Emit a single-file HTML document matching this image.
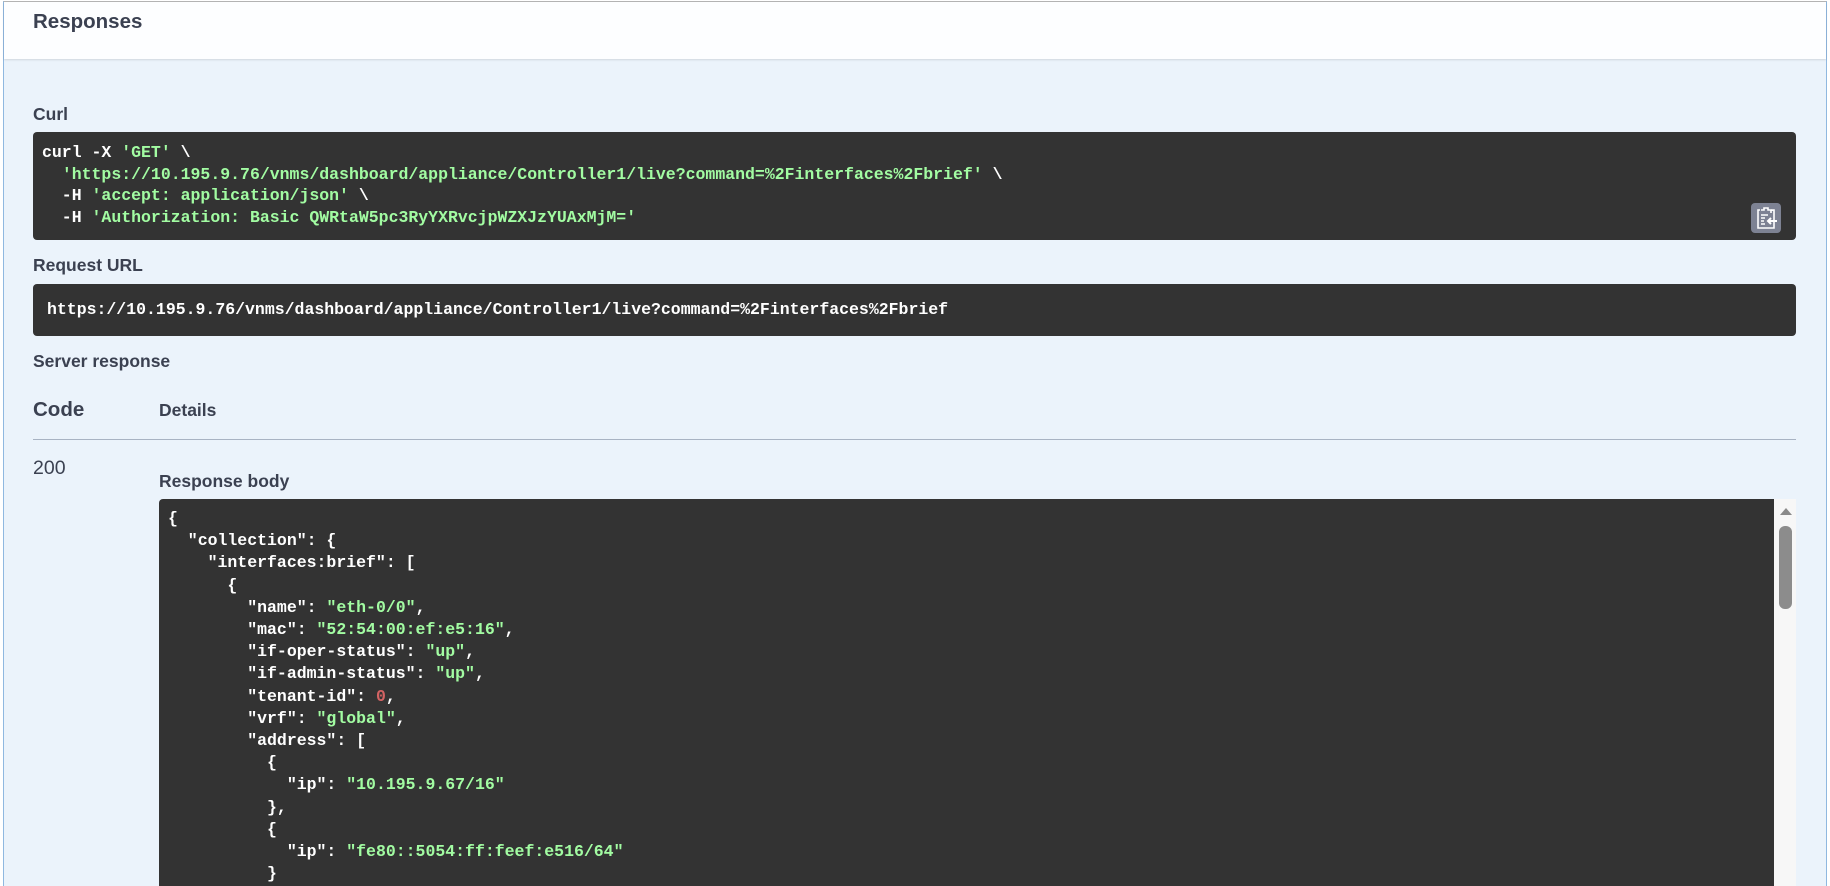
<!DOCTYPE html>
<html><head><meta charset="utf-8"><style>
*{margin:0;padding:0;box-sizing:border-box}
html,body{width:1830px;height:886px;overflow:hidden;background:#fff}
body{font-family:"Liberation Sans",sans-serif;color:#3b4151;position:relative}
.frame{position:absolute;left:3px;top:1px;width:1824px;height:886px;background:#ebf3fb;border-left:1px solid #8fb8e0;border-right:1px solid #8fb8e0;border-top:1px solid #b5b5b5}
.hdr{position:absolute;left:0;top:0;right:0;height:57px;background:#fdfeff;box-shadow:0 1px 2px rgba(0,0,0,.12)}
.lbl{position:absolute;font-weight:bold;font-size:17.5px;color:#3b4151}
.box{position:absolute;background:#333;border-radius:4px;font-family:"Liberation Mono",monospace;font-weight:bold;font-size:16.5px;color:#fff;white-space:pre}
.g{color:#a2fca2}.r{color:#d36363}
</style></head><body>
<div class="frame">
<div class="hdr"><div class="lbl" style="left:29px;top:8px;font-size:20.5px">Responses</div></div>
<div class="lbl" style="left:29px;top:102px">Curl</div>
<div class="box" style="left:29px;top:130px;width:1763px;height:108px;line-height:21.7px;padding:10px 0 0 9px">curl -X <span class="g">'GET'</span> \
  <span class="g">'https://10.195.9.76/vnms/dashboard/appliance/Controller1/live?command=%2Finterfaces%2Fbrief'</span> \
  -H <span class="g">'accept: application/json'</span> \
  -H <span class="g">'Authorization: Basic QWRtaW5pc3RyYXRvcjpWZXJzYUAxMjM='</span></div>
<div style="position:absolute;left:1747px;top:201px;width:30px;height:30px;background:#7d8293;border-radius:4px">
<svg width="30" height="30" viewBox="0 0 30 30"><path d="M10 7h3v-2h4v2h3v3" fill="none" stroke="#fff" stroke-width="1.6"/><path d="M21 8v-1h2v18h-16v-18h2" fill="none" stroke="#fff" stroke-width="1.6"/><path d="M10 12h7M10 15h4M10 18h3M10 21h4" stroke="#fff" stroke-width="1.5"/><path d="M26 18h-9M20 15l-3 3 3 3" fill="none" stroke="#fff" stroke-width="2"/></svg></div>
<div class="lbl" style="left:29px;top:253px">Request URL</div>
<div class="box" style="left:29px;top:282px;width:1763px;height:52px;line-height:52px;padding-left:14px">https://10.195.9.76/vnms/dashboard/appliance/Controller1/live?command=%2Finterfaces%2Fbrief</div>
<div class="lbl" style="left:29px;top:349px">Server response</div>
<div class="lbl" style="left:29px;top:396px;font-size:20.5px">Code</div>
<div class="lbl" style="left:155px;top:398px">Details</div>
<div style="position:absolute;left:29px;top:437px;width:1763px;height:1px;background:#a8b3c3"></div>
<div style="position:absolute;left:29px;top:455px;font-size:19.5px">200</div>
<div class="lbl" style="left:155px;top:469px">Response body</div>
<div class="box" style="left:155px;top:497px;width:1615px;height:400px;border-radius:4px 0 0 0;line-height:22.2px;padding:9px 0 0 9px">{
  "collection": {
    "interfaces:brief": [
      {
        "name": <span class="g">"eth-0/0"</span>,
        "mac": <span class="g">"52:54:00:ef:e5:16"</span>,
        "if-oper-status": <span class="g">"up"</span>,
        "if-admin-status": <span class="g">"up"</span>,
        "tenant-id": <span class="r">0</span>,
        "vrf": <span class="g">"global"</span>,
        "address": [
          {
            "ip": <span class="g">"10.195.9.67/16"</span>
          },
          {
            "ip": <span class="g">"fe80::5054:ff:feef:e516/64"</span>
          }</div>
<div style="position:absolute;left:1770px;top:497px;width:22px;height:400px;background:#f7f7f7">
<div style="position:absolute;left:6px;top:9px;width:0;height:0;border-left:6px solid transparent;border-right:6px solid transparent;border-bottom:7px solid #8a8a8a"></div>
<div style="position:absolute;left:5px;top:27px;width:13px;height:83px;background:#8c8c8c;border-radius:6px"></div>
</div>
</div>
</body></html>
